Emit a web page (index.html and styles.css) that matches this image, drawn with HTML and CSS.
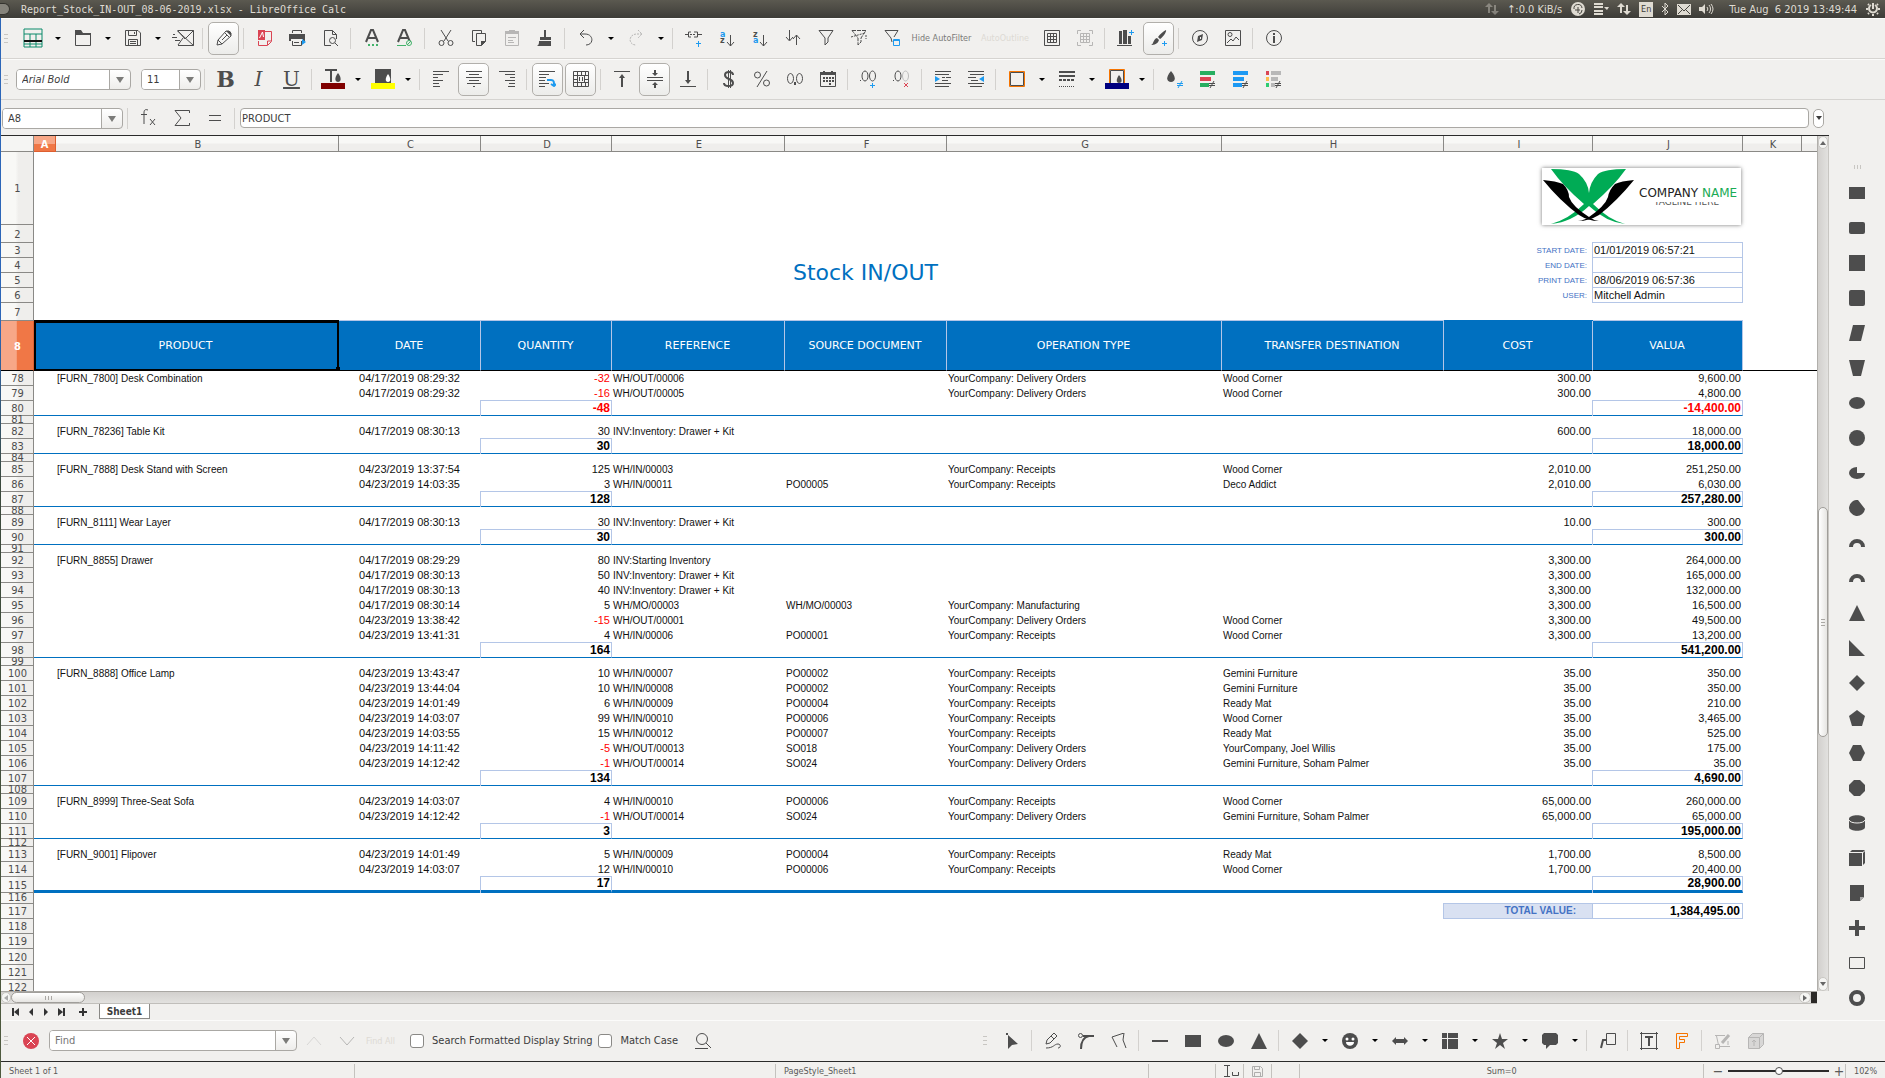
FILE: index.html
```html
<!DOCTYPE html>
<html lang="en">
<head>
    <meta charset="UTF-8">
    <meta name="viewport" content="width=device-width, initial-scale=1.0">
    <title>Report_Stock_IN-OUT_08-06-2019.xlsx - LibreOffice Calc</title>
    <link rel="stylesheet" href="styles.css">
</head>
<body>
<div class="app">
    <!-- Title bar -->
    <header class="titlebar">
        <span class="window-dot"></span>
        <span class="window-title">Report_Stock_IN-OUT_08-06-2019.xlsx - LibreOffice Calc</span>
        <div class="tray">
            <svg class="dim" width="14" height="14" viewBox="0 0 14 14"><path d="M4 1L0 5h3v6h2V5h3zM10 13l4-4h-3V3H9v6H6z"/></svg>
            <span>↑:0.0 KiB/s</span>
            <svg width="16" height="16" viewBox="0 0 16 16"><circle cx="8" cy="8" r="7"/><path class="cut" d="M4 8a4 4 0 0 1 8-1M5 9h5M8 6v6M12 9a4 4 0 0 1-3 4"/></svg>
            <svg width="15" height="14" viewBox="0 0 15 14"><path d="M0 1h9v2H0zM0 4h9v2H0zM0 8h9v2H0zM0 11h9v2H0zM10 5h5l-2 3z"/></svg>
            <svg width="14" height="14" viewBox="0 0 14 14"><path d="M4 1L0 5h3v6h2V5h3zM10 13l4-4h-3V3H9v6H6z"/></svg>
            <span class="lang">En</span>
            <svg class="line" width="8" height="14" viewBox="0 0 8 14"><path d="M1 4l6 6-3 3V1l3 3-6 6"/></svg>
            <svg width="14" height="11" viewBox="0 0 14 11"><path d="M0 0h14v11H0z"/><path class="cut" d="M1 1l6 6 6-6M1 10l4-4M13 10L9 6"/></svg>
            <svg width="16" height="12" viewBox="0 0 16 12"><path d="M0 4h3l3-3v10L3 8H0z"/><path class="ring" d="M8 4a3 3 0 0 1 0 4M10 2a6 6 0 0 1 0 8M12 1a8 8 0 0 1 0 10"/></svg>
            <span class="clock">Tue Aug  6 2019 13:49:44</span>
            <svg class="line" width="16" height="16" viewBox="0 0 16 16"><path stroke-width="2" d="M6 4a4 4 0 1 0 4 0M8 2v6"/><path stroke-width="2" d="M1 8h2M13 8h2M3 13l1-1M13 13l-1-1M3 3l1 1M13 3l-1 1M8 13v2"/></svg>
        </div>
    </header>

    <!-- Standard toolbar -->
    <div class="toolbar">
        <span class="grip"></span>
        <button class="tool" title="New"><svg class="green" width="20" height="20" viewBox="0 0 20 20"><path d="M1 1h18v18H1zM1 6h18M7 6v13M13 6v13"/><path stroke="#111" stroke-width="2" d="M1 13h18"/><path d="M1 16h18"/></svg></button>
        <button class="drop" title="New options"></button>
        <button class="tool" title="Open"><svg width="16" height="16" viewBox="0 0 16 16"><path d="M.5 3v12.500h15V3.500H8"/><path class="solid" d="M0 0h6l2 3h8v2H0z"/></svg></button>
        <button class="drop" title="Recent files"></button>
        <button class="tool" title="Save"><svg width="16" height="16" viewBox="0 0 16 16"><path d="M.5.500H13l2.500 2.500v12.500H.5zM3.500.500v5h8v-5M9.500 2v2M3.500 15.500v-6h9v6M5 11.500h6M5 13.500h6"/></svg></button>
        <button class="drop" title="Save as"></button>
        <button class="tool" title="Send by e-mail"><svg width="22" height="16" viewBox="0 0 22 16"><path d="M6 .5h15.500v15L5 .5M6 15.500h15.500M21.500.500L13 9 6 1M6 15l5-7M0 7.500h5M3 10.500h5M1 4.500h2"/></svg></button>
        <span class="sep"></span>
        <button class="tool on" title="Edit mode"><svg width="16" height="16" viewBox="0 0 16 16"><path d="M1 15l1-5 8-9h3l2 2v3l-9 8zM9 3l4 4M2 10l4 4M6 10l5-5"/><path class="solid" d="M10 1h4l1 2v3z"/></svg></button>
        <span class="sep"></span>
        <button class="tool" title="Export as PDF"><svg class="red" width="16" height="16" viewBox="0 0 16 16"><path d="M8 1.500h6.500v10l-4 4h-9V11M10.500 15v-4H14"/><path class="solid" d="M1 0h7v10H1z"/><path stroke="#fff" d="M2.500 8l3-6 1 5"/></svg></button>
        <button class="tool" title="Print"><svg width="17" height="16" viewBox="0 0 17 16"><path d="M3.500 3V.500h9V3M3.500 11v4.500h9V11M5 12.500h5"/><path class="solid" d="M0 4h16v7h-2V9H2v2H0z"/><path fill="#1e9bf0" stroke="none" d="M13 9l4 3-4 3z"/></svg></button>
        <button class="tool" title="Print preview"><svg width="16" height="16" viewBox="0 0 16 16"><path d="M8 15.500H1.500V.500h8l4 4V9M9.500.500v4h4"/><circle cx="9.500" cy="10.500" r="3"/><path d="M12 13l3 3"/></svg></button>
        <span class="sep"></span>
        <button class="tool" title="Spelling"><svg width="16" height="18" viewBox="0 0 16 18"><path stroke-width="2" d="M2 13L7 1h2l5 12M4 9h8"/><path fill="#43b36b" stroke="none" d="M4 15h2v2H4zM8 15h2v2H8zM12 15h2v2h-2z"/></svg></button>
        <button class="tool" title="Auto spellcheck"><svg width="17" height="18" viewBox="0 0 17 18"><path stroke-width="2" d="M2 13L7 1h2l5 12M4 9h8"/><path stroke="#43b36b" d="M1 16.500h9"/><circle fill="#f1f0ee" stroke="#43b36b" cx="13" cy="14" r="2.500"/><path stroke="#43b36b" d="M11 16l4-4"/></svg></button>
        <span class="sep"></span>
        <button class="tool" title="Cut"><svg width="16" height="16" viewBox="0 0 16 16"><path d="M3 0l7 11M13 0L6 11"/><circle cx="3.500" cy="13" r="2.500"/><circle cx="12.500" cy="13" r="2.500"/></svg></button>
        <button class="tool" title="Copy"><svg width="16" height="16" viewBox="0 0 16 16"><path d="M4 11.500H1.500V.500h9V3M5.500 3.500h9v8l-4 4h-5z"/><path class="solid" d="M10 16v-5h5z"/></svg></button>
        <button class="tool off" title="Paste"><svg width="16" height="16" viewBox="0 0 16 16"><path d="M1.500 2v13.500h13V2zM4 7.500h8M4 10.500h5M4 12.500h6"/><path class="solid" d="M1 1h4V0h6v1h4v3H1z"/></svg></button>
        <button class="tool" title="Clone formatting"><svg width="16" height="16" viewBox="0 0 16 16"><path class="solid" d="M7 0h2v7h5v3H3V7h4zM2 11h12v5H0c2-1 2-3 2-5z"/></svg></button>
        <span class="sep"></span>
        <button class="tool" title="Undo"><svg width="16" height="16" viewBox="0 0 16 16"><path d="M6 0L2 4l4 4M2 4h5c9 0 9 11 1 11"/></svg></button>
        <button class="drop" title="Undo list"></button>
        <button class="tool off" title="Redo"><svg width="16" height="16" viewBox="0 0 16 16"><path stroke-dasharray="2 1" d="M10 0l4 4-4 4M14 4H9c-9 0-9 11-1 11"/></svg></button>
        <button class="drop" title="Redo list"></button>
        <span class="sep"></span>
        <button class="tool" title="Hyperlink"><svg width="17" height="18" viewBox="0 0 17 18"><path d="M0 5.500h4M6 3H3.500v5H6M5 5.500h2M8 5.500h2M9 3h3.500v5H9M13 5.500h4"/><path stroke="#1e9bf0" d="M13.500 12v6M11 14.500h5"/></svg></button>
        <button class="tool" title="Sort ascending"><svg width="16" height="18" viewBox="0 0 16 18"><text class="mark blue" x="1" y="8">a</text><text class="mark" x="1" y="14">z</text><path d="M11.500 6v11M8 13l3.500 4 3.500-4"/></svg></button>
        <button class="tool" title="Sort descending"><svg width="16" height="18" viewBox="0 0 16 18"><text class="mark" x="1" y="8">z</text><text class="mark blue" x="1" y="14">a</text><path d="M11.500 6v11M8 13l3.500 4 3.500-4"/></svg></button>
        <button class="tool" title="Sort"><svg width="16" height="16" viewBox="0 0 16 16"><path d="M4.500 0v10M1 7l3.500 4L8 7M11.500 15V5M8 9l3.500-4L15 9"/></svg></button>
        <button class="tool" title="AutoFilter"><svg width="16" height="16" viewBox="0 0 16 16"><path d="M1 .5h14L10 8v4l-3 3V8z"/></svg></button>
        <button class="tool" title="Standard filter"><svg width="16" height="16" viewBox="0 0 16 16"><path stroke-dasharray="4 1" d="M1 .5h14L10 8v4l-3 3V8z"/><path stroke-dasharray="2 1" d="M0 7l14-4M15 5v4"/></svg></button>
        <button class="tool" title="Advanced filter"><svg width="16" height="16" viewBox="0 0 16 16"><path d="M8 12l-1-4L1 .5h13L10 7"/><path stroke="#1e9bf0" d="M9.500 9.500h6v6h-6zM9.500 10.500h6"/></svg></button>
        <button class="tool-text tool-text-wide">Hide AutoFilter</button>
        <button class="tool-text faint">AutoOutline</button>
        <button class="tool" title="Headers and footers"><svg width="16" height="16" viewBox="0 0 16 16"><path d="M.5.500h15v15H.5zM3.500 3.500h9v9h-9zM6.500 3.500v9M9.500 3.500v9M3.500 6.500h9M3.500 9.500h9"/></svg></button>
        <button class="tool off" title="Print area"><svg width="16" height="16" viewBox="0 0 16 16"><path d="M.5 4V.500H4M12 .5h3.500V4M.5 12v3.500H4M12 15.500h3.500V12M3.500 3.500h9v9h-9zM6.500 3.500v9M9.500 3.500v9M3.500 6.500h9M3.500 9.500h9"/></svg></button>
        <span class="sep"></span>
        <button class="tool" title="Insert chart"><svg width="17" height="16" viewBox="0 0 17 16"><path class="solid" d="M2 1h3v13H2zM6 0h4v14H6zM11 6h3v8h-3zM0 15h15v1H0z"/><path stroke="#1e9bf0" d="M14.500 0v5M12 2.500h5"/></svg></button>
        <button class="tool on" title="Show draw functions"><svg width="16" height="16" viewBox="0 0 16 16"><path class="solid" d="M15 0c1 2-4 8-6 9L7 7c2-3 6-6 8-7zM6 8l2 2c-1 4-5 5-8 5 3-1 2-6 6-7z"/><path stroke="#1e9bf0" d="M13.500 11v5M11 13.500h5"/></svg></button>
        <span class="sep"></span>
        <button class="tool" title="Navigator"><svg width="16" height="16" viewBox="0 0 16 16"><circle cx="8" cy="8" r="7.500"/><path class="solid" d="M11 4l-1 6-5 2 1-6zM8 7v2h1V7z"/></svg></button>
        <button class="tool" title="Insert image"><svg width="16" height="16" viewBox="0 0 16 16"><path d="M.5.500h15v15H.5zM2 13l4-4 2 2 3-4 3 3"/><circle cx="5" cy="4.500" r="2"/></svg></button>
        <span class="sep"></span>
        <button class="tool" title="Help"><svg width="16" height="16" viewBox="0 0 16 16"><circle cx="8" cy="8" r="7.500"/><path stroke-width="2" d="M8 3v2M8 6v7"/></svg></button>
    </div>

    <!-- Formatting toolbar -->
    <div class="toolbar">
        <span class="grip"></span>
        <span class="combo combo-font"><select class="italic" aria-label="Font name"><option>Arial Bold</option></select></span>
        <span class="combo combo-size"><select aria-label="Font size"><option>11</option></select></span>
        <span class="sep"></span>
        <button class="tool glyph bold" title="Bold">B</button>
        <button class="tool glyph slant" title="Italic">I</button>
        <button class="tool glyph under" title="Underline">U</button>
        <span class="sep"></span>
        <button class="tool" title="Font color"><svg width="24" height="20" viewBox="0 0 24 20"><path stroke-width="2" d="M4 1h12M10 1v12"/><path class="solid" d="M17 4c4 5 3 9 0 9s-4-4 0-9z"/><path fill="#800000" stroke="none" d="M0 14h24v6H0z"/></svg></button>
        <button class="drop" title="Font colors"></button>
        <button class="tool" title="Background color"><svg width="24" height="20" viewBox="0 0 24 20"><path class="solid" d="M4 0h16v14H4z"/><path fill="#fff" stroke="none" d="M17 5c3 4 3 8 0 8s-3-4 0-8z"/><path fill="#ff0" stroke="none" d="M0 14h24v6H0z"/></svg></button>
        <button class="drop" title="Background colors"></button>
        <span class="sep"></span>
        <button class="tool" title="Align left"><svg width="16" height="16" viewBox="0 0 16 16"><path d="M0 .5h16M0 3.500h10M0 6.500h5M0 9.500h10M0 12.500h6M0 15.500h7"/></svg></button>
        <button class="tool on" title="Center"><svg width="16" height="16" viewBox="0 0 16 16"><path d="M0 .5h16M3 3.500h10M0 6.500h16M3 9.500h10M1 12.500h14M7 15.500h2"/></svg></button>
        <button class="tool" title="Align right"><svg width="16" height="16" viewBox="0 0 16 16"><path d="M0 .5h16M6 3.500h10M11 6.500h5M6 9.500h10M10 12.500h6M9 15.500h7"/></svg></button>
        <span class="sep"></span>
        <button class="tool on" title="Wrap text"><svg width="17" height="16" viewBox="0 0 17 16"><path d="M0 .5h16M0 3.500h10M0 6.500h7M0 9.500h6M0 12.500h10M0 15.500h6"/><path stroke="#1e9bf0" stroke-width="2" d="M8 9h4c3 0 3 2 3 5M12 13l3 2 2-2"/></svg></button>
        <button class="tool on" title="Merge cells"><svg width="16" height="16" viewBox="0 0 16 16"><path d="M.5.500h15v15H.5zM0 4.500h16M0 11.500h16M4.500 0v5M8.500 0v4M12.500 0v5M4.500 11v5M8.500 12v4M12.500 11v5M0 8.500h4M12 8.500h4M6.500 6v4M9.500 6v4M4.500 5v6M11.500 5v6"/></svg></button>
        <span class="sep"></span>
        <button class="tool" title="Align top"><svg width="16" height="16" viewBox="0 0 16 16"><path d="M0 .5h16"/><path stroke-width="2" d="M8 5v11"/><path class="solid" d="M8 3l3 4H5z"/></svg></button>
        <button class="tool on" title="Center vertically"><svg width="16" height="18" viewBox="0 0 16 18"><path d="M0 7.500h16M0 10.500h16"/><path class="solid" d="M7 0h2v3h2L8 6 5 3h2zM7 18h2v-3h2l-3-3-3 3h2z"/></svg></button>
        <button class="tool" title="Align bottom"><svg width="16" height="16" viewBox="0 0 16 16"><path d="M0 15.500h16"/><path stroke-width="2" d="M8 0v11"/><path class="solid" d="M8 13l3-4H5z"/></svg></button>
        <span class="sep"></span>
        <button class="tool" title="Currency"><svg width="12" height="18" viewBox="0 0 12 18"><path stroke-width="2" d="M10 5c0-4-8-4-8 0 0 5 8 3 8 8 0 4-9 4-9 0"/><path d="M5.500 0v18M7.500 0v18"/></svg></button>
        <button class="tool" title="Percent"><svg width="16" height="16" viewBox="0 0 16 16"><circle cx="3.500" cy="4" r="3"/><circle cx="12.500" cy="12" r="3"/><path d="M13 0L3 16"/></svg></button>
        <button class="tool" title="Number"><svg width="18" height="16" viewBox="0 0 18 16"><ellipse cx="4.500" cy="7.500" rx="3" ry="5"/><ellipse cx="13.500" cy="7.500" rx="3" ry="5"/><path stroke-width="2" d="M9 11v3"/></svg></button>
        <button class="tool" title="Date"><svg width="16" height="16" viewBox="0 0 16 16"><path d="M.5 1v14.500h15V1"/><path class="solid" d="M0 1h3V0h2v1h6V0h2v1h3v3H0zM3 6h2v2H3zM6 6h2v2H6zM9 6h2v2H9zM12 6h2v2h-2zM3 9h2v2H3zM6 9h2v2H6zM9 9h2v2H9zM12 9h2v2h-2zM9 12h2v2H9z"/></svg></button>
        <span class="sep"></span>
        <button class="tool" title="Add decimal place"><svg width="17" height="18" viewBox="0 0 17 18"><ellipse cx="5" cy="6" rx="3" ry="5"/><ellipse cx="12.500" cy="6" rx="3" ry="5"/><path d="M0 10.500h1"/><path stroke="#1e9bf0" d="M12.500 13v5M10 15.500h5"/></svg></button>
        <button class="tool" title="Delete decimal place"><svg width="17" height="18" viewBox="0 0 17 18"><ellipse cx="5" cy="6" rx="3" ry="5"/><ellipse stroke="#bbb" cx="12.500" cy="6" rx="3" ry="5"/><path d="M0 10.500h1"/><path stroke="#da4453" d="M11 13l4 4M15 13l-4 4"/></svg></button>
        <span class="sep"></span>
        <button class="tool" title="Increase indent"><svg width="16" height="16" viewBox="0 0 16 16"><path d="M0 .5h16M0 3.500h14M7 6.500h3M11 6.500h5M7 9.500h6M0 12.500h16M0 15.500h14"/><path fill="#1e9bf0" stroke="none" d="M0 5l5 3-5 3z"/></svg></button>
        <button class="tool" title="Decrease indent"><svg width="16" height="16" viewBox="0 0 16 16"><path d="M0 .5h16M2 3.500h14M0 6.500h8M3 9.500h7M0 12.500h16M2 15.500h12"/><path fill="#1e9bf0" stroke="none" d="M16 5l-5 3 5 3z"/></svg></button>
        <span class="sep"></span>
        <button class="tool" title="Borders"><svg width="16" height="16" viewBox="0 0 16 16"><path stroke="#f67400" d="M.5.500h15v15H.5z"/><path d="M1.500 1.500h13v13h-13z"/></svg></button>
        <button class="drop" title="Border list"></button>
        <button class="tool" title="Border style"><svg width="16" height="16" viewBox="0 0 16 16"><path stroke-width="2" d="M0 1h16M0 5h16"/><path stroke-width="2" stroke-dasharray="3 1" d="M0 9h16"/><path stroke-dasharray="1 1" d="M0 15.500h16"/></svg></button>
        <button class="drop" title="Border styles"></button>
        <button class="tool" title="Border color"><svg width="24" height="20" viewBox="0 0 24 20"><path stroke="#f67400" d="M4.500 14V.500h15V14"/><path d="M5.500 14V1.500h13V14"/><path class="solid" d="M14 6c4 5 3 8 0 8s-3-4 0-8z"/><path fill="#000080" stroke="none" d="M0 14h24v6H0z"/></svg></button>
        <button class="drop" title="Border colors"></button>
        <span class="sep"></span>
        <button class="tool" title="Conditional formatting"><svg width="17" height="18" viewBox="0 0 17 18"><path class="solid" d="M5 1c6 7 4 11 0 11S-1 8 5 1z"/><path stroke="#1e9bf0" d="M11 13.500h6M11 15.500h6M16 11l-4 7"/></svg></button>
        <button class="tool" title="Color scale"><svg width="17" height="18" viewBox="0 0 17 18"><path fill="#27ae60" stroke="none" d="M1 1h15v4H1zM1 13h9v4H1z"/><path fill="#da4453" stroke="none" d="M1 7h11v4H1z"/><path d="M10 13.500h6M10 15.500h6M15 11l-4 7"/></svg></button>
        <button class="tool" title="Data bar"><svg width="17" height="18" viewBox="0 0 17 18"><path fill="#1d99f3" stroke="none" d="M1 1h15v4H1zM1 7h11v4H1zM1 13h9v4H1z"/><path d="M10 13.500h6M10 15.500h6M15 11l-4 7"/></svg></button>
        <button class="tool" title="Icon set"><svg width="17" height="18" viewBox="0 0 17 18"><path fill="#b8b8b8" stroke="none" d="M6 1h10v4H6zM6 7h7v4H6zM6 13h4v4H6z"/><path fill="#da4453" stroke="none" d="M1 1h3v4H1z"/><path fill="#fdbc4b" stroke="none" d="M1 7h3v4H1z"/><path fill="#2ecc71" stroke="none" d="M1 13h3v4H1z"/><path d="M10 13.500h6M10 15.500h6M15 11l-4 7"/></svg></button>
    </div>

    <!-- Formula bar -->
    <div class="formula-bar">
        <span class="combo combo-name"><input type="text" value="A8" aria-label="Name box"></span>
        <span class="sep"></span>
        <button class="tool" title="Function wizard"><svg width="16" height="18" viewBox="0 0 16 18"><path d="M7 1c-3-1-4 0-4 3v11M0 5.500h6M9 10l5 6M14 10l-5 6"/></svg></button>
        <button class="tool" title="Sum"><svg width="16" height="16" viewBox="0 0 16 16"><path d="M15.500 3V.500H1L7 8l-6 7.500h14.500V13"/></svg></button>
        <button class="tool" title="Formula"><svg width="12" height="8" viewBox="0 0 12 8"><path d="M0 1.500h12M0 6.500h12"/></svg></button>
        <span class="sep"></span>
        <input class="formula" type="text" value="PRODUCT" aria-label="Input line">
        <button class="expand" title="Expand formula bar"></button>
    </div>

    <div class="workspace">
        <div class="sheet-area">
            <div class="sheet-row">
                <div class="sheet">
                    <table>
                        <colgroup>
                            <col class="c-num"><col class="c-a"><col class="c-b"><col class="c-c"><col class="c-d"><col class="c-e"><col class="c-f"><col class="c-g"><col class="c-h"><col class="c-i"><col class="c-j"><col class="c-k"><col>
                        </colgroup>
                        <thead>
                            <tr><th class="corner"></th><th class="picked">A</th><th>B</th><th>C</th><th>D</th><th>E</th><th>F</th><th>G</th><th>H</th><th>I</th><th>J</th><th>K</th><th class="last"></th></tr>
                        </thead>
                        <tbody>
                            <tr class="h73"><th>1</th><td colspan="9"></td>
                                <td class="logo-cell">
                                    <svg class="logo" width="199" height="57" viewBox="0 0 199 57">
                                        <path fill="#00ab55" d="M9 1Q30 1 37 6Q46 14 47 25Q48 14 56 6Q63 1 84 1Q72 18 51 36Q67 52 83 56Q64 54 47 38Q30 54 9 56Q27 51 42 36Q21 18 9 1z"/>
                                        <path d="M1 12Q14 13 21 16Q27 22 27 29Q30 38 47 49Q51 52 57 53Q46 53 37 47Q18 33 1 12z"/>
                                        <path d="M92 12Q79 13 73 16Q67 22 66 29Q63 38 47 49Q43 52 36 53Q47 53 57 47Q75 33 92 12z"/>
                                        <text class="logo-name" x="97" y="29">COMPANY <tspan fill="#1aab55">NAME</tspan></text>
                                        <clipPath id="tagline"><path d="M100 34h99v3h-99z"/></clipPath>
                                        <text class="logo-tag" x="112" y="37" clip-path="url(#tagline)">TAGLINE HERE</text>
                                    </svg>
                                </td><td colspan="2"></td></tr>
                            <tr class="h18"><th>2</th><td colspan="12"></td></tr>
                            <tr><th>3</th><td colspan="5"></td><td class="report-title" rowspan="4">Stock IN/OUT</td><td colspan="2"></td><td class="label">START DATE:</td><td class="box">01/01/2019 06:57:21</td><td colspan="2"></td></tr>
                            <tr><th>4</th><td colspan="5"></td><td colspan="2"></td><td class="label">END DATE:</td><td class="box"></td><td colspan="2"></td></tr>
                            <tr><th>5</th><td colspan="5"></td><td colspan="2"></td><td class="label">PRINT DATE:</td><td class="box">08/06/2019 06:57:36</td><td colspan="2"></td></tr>
                            <tr><th>6</th><td colspan="5"></td><td colspan="2"></td><td class="label">USER:</td><td class="box">Mitchell Admin</td><td colspan="2"></td></tr>
                            <tr class="h18"><th>7</th><td colspan="12"></td></tr>
                            <tr class="heads"><th>8</th><td class="head cursor" colspan="2">PRODUCT</td><td class="head">DATE</td><td class="head">QUANTITY</td><td class="head">REFERENCE</td><td class="head">SOURCE DOCUMENT</td><td class="head">OPERATION TYPE</td><td class="head">TRANSFER DESTINATION</td><td class="head plain">COST</td><td class="head">VALUA</td><td colspan="2"></td></tr>

                            <tr><th>78</th><td></td><td>[FURN_7800] Desk Combination</td><td class="date">04/17/2019 08:29:32</td><td class="num neg">-32</td><td>WH/OUT/00006</td><td></td><td>YourCompany: Delivery Orders</td><td>Wood Corner</td><td class="num">300.00</td><td class="num">9,600.00</td></tr>
                            <tr><th>79</th><td></td><td></td><td class="date">04/17/2019 08:29:32</td><td class="num neg">-16</td><td>WH/OUT/00005</td><td></td><td>YourCompany: Delivery Orders</td><td>Wood Corner</td><td class="num">300.00</td><td class="num">4,800.00</td></tr>
                            <tr class="total"><th>80</th><td colspan="3"></td><td class="sum neg">-48</td><td colspan="5"></td><td class="sum neg">-14,400.00</td></tr>
                            <tr class="gap"><th>81</th></tr>
                            <tr><th>82</th><td></td><td>[FURN_78236] Table Kit</td><td class="date">04/17/2019 08:30:13</td><td class="num">30</td><td>INV:Inventory: Drawer + Kit</td><td></td><td></td><td></td><td class="num">600.00</td><td class="num">18,000.00</td></tr>
                            <tr class="total"><th>83</th><td colspan="3"></td><td class="sum">30</td><td colspan="5"></td><td class="sum">18,000.00</td></tr>
                            <tr class="gap"><th>84</th></tr>
                            <tr><th>85</th><td></td><td>[FURN_7888] Desk Stand with Screen</td><td class="date">04/23/2019 13:37:54</td><td class="num">125</td><td>WH/IN/00003</td><td></td><td>YourCompany: Receipts</td><td>Wood Corner</td><td class="num">2,010.00</td><td class="num">251,250.00</td></tr>
                            <tr><th>86</th><td></td><td></td><td class="date">04/23/2019 14:03:35</td><td class="num">3</td><td>WH/IN/00011</td><td>PO00005</td><td>YourCompany: Receipts</td><td>Deco Addict</td><td class="num">2,010.00</td><td class="num">6,030.00</td></tr>
                            <tr class="total"><th>87</th><td colspan="3"></td><td class="sum">128</td><td colspan="5"></td><td class="sum">257,280.00</td></tr>
                            <tr class="gap"><th>88</th></tr>
                            <tr><th>89</th><td></td><td>[FURN_8111] Wear Layer</td><td class="date">04/17/2019 08:30:13</td><td class="num">30</td><td>INV:Inventory: Drawer + Kit</td><td></td><td></td><td></td><td class="num">10.00</td><td class="num">300.00</td></tr>
                            <tr class="total"><th>90</th><td colspan="3"></td><td class="sum">30</td><td colspan="5"></td><td class="sum">300.00</td></tr>
                            <tr class="gap"><th>91</th></tr>
                            <tr><th>92</th><td></td><td>[FURN_8855] Drawer</td><td class="date">04/17/2019 08:29:29</td><td class="num">80</td><td>INV:Starting Inventory</td><td></td><td></td><td></td><td class="num">3,300.00</td><td class="num">264,000.00</td></tr>
                            <tr><th>93</th><td></td><td></td><td class="date">04/17/2019 08:30:13</td><td class="num">50</td><td>INV:Inventory: Drawer + Kit</td><td></td><td></td><td></td><td class="num">3,300.00</td><td class="num">165,000.00</td></tr>
                            <tr><th>94</th><td></td><td></td><td class="date">04/17/2019 08:30:13</td><td class="num">40</td><td>INV:Inventory: Drawer + Kit</td><td></td><td></td><td></td><td class="num">3,300.00</td><td class="num">132,000.00</td></tr>
                            <tr><th>95</th><td></td><td></td><td class="date">04/17/2019 08:30:14</td><td class="num">5</td><td>WH/MO/00003</td><td>WH/MO/00003</td><td>YourCompany: Manufacturing</td><td></td><td class="num">3,300.00</td><td class="num">16,500.00</td></tr>
                            <tr><th>96</th><td></td><td></td><td class="date">04/23/2019 13:38:42</td><td class="num neg">-15</td><td>WH/OUT/00001</td><td></td><td>YourCompany: Delivery Orders</td><td>Wood Corner</td><td class="num">3,300.00</td><td class="num">49,500.00</td></tr>
                            <tr><th>97</th><td></td><td></td><td class="date">04/23/2019 13:41:31</td><td class="num">4</td><td>WH/IN/00006</td><td>PO00001</td><td>YourCompany: Receipts</td><td>Wood Corner</td><td class="num">3,300.00</td><td class="num">13,200.00</td></tr>
                            <tr class="total"><th>98</th><td colspan="3"></td><td class="sum">164</td><td colspan="5"></td><td class="sum">541,200.00</td></tr>
                            <tr class="gap"><th>99</th></tr>
                            <tr><th>100</th><td></td><td>[FURN_8888] Office Lamp</td><td class="date">04/23/2019 13:43:47</td><td class="num">10</td><td>WH/IN/00007</td><td>PO00002</td><td>YourCompany: Receipts</td><td>Gemini Furniture</td><td class="num">35.00</td><td class="num">350.00</td></tr>
                            <tr><th>101</th><td></td><td></td><td class="date">04/23/2019 13:44:04</td><td class="num">10</td><td>WH/IN/00008</td><td>PO00002</td><td>YourCompany: Receipts</td><td>Gemini Furniture</td><td class="num">35.00</td><td class="num">350.00</td></tr>
                            <tr><th>102</th><td></td><td></td><td class="date">04/23/2019 14:01:49</td><td class="num">6</td><td>WH/IN/00009</td><td>PO00004</td><td>YourCompany: Receipts</td><td>Ready Mat</td><td class="num">35.00</td><td class="num">210.00</td></tr>
                            <tr><th>103</th><td></td><td></td><td class="date">04/23/2019 14:03:07</td><td class="num">99</td><td>WH/IN/00010</td><td>PO00006</td><td>YourCompany: Receipts</td><td>Wood Corner</td><td class="num">35.00</td><td class="num">3,465.00</td></tr>
                            <tr><th>104</th><td></td><td></td><td class="date">04/23/2019 14:03:55</td><td class="num">15</td><td>WH/IN/00012</td><td>PO00007</td><td>YourCompany: Receipts</td><td>Ready Mat</td><td class="num">35.00</td><td class="num">525.00</td></tr>
                            <tr><th>105</th><td></td><td></td><td class="date">04/23/2019 14:11:42</td><td class="num neg">-5</td><td>WH/OUT/00013</td><td>SO018</td><td>YourCompany: Delivery Orders</td><td>YourCompany, Joel Willis</td><td class="num">35.00</td><td class="num">175.00</td></tr>
                            <tr><th>106</th><td></td><td></td><td class="date">04/23/2019 14:12:42</td><td class="num neg">-1</td><td>WH/OUT/00014</td><td>SO024</td><td>YourCompany: Delivery Orders</td><td>Gemini Furniture, Soham Palmer</td><td class="num">35.00</td><td class="num">35.00</td></tr>
                            <tr class="total"><th>107</th><td colspan="3"></td><td class="sum">134</td><td colspan="5"></td><td class="sum">4,690.00</td></tr>
                            <tr class="gap"><th>108</th></tr>
                            <tr><th>109</th><td></td><td>[FURN_8999] Three-Seat Sofa</td><td class="date">04/23/2019 14:03:07</td><td class="num">4</td><td>WH/IN/00010</td><td>PO00006</td><td>YourCompany: Receipts</td><td>Wood Corner</td><td class="num">65,000.00</td><td class="num">260,000.00</td></tr>
                            <tr><th>110</th><td></td><td></td><td class="date">04/23/2019 14:12:42</td><td class="num neg">-1</td><td>WH/OUT/00014</td><td>SO024</td><td>YourCompany: Delivery Orders</td><td>Gemini Furniture, Soham Palmer</td><td class="num">65,000.00</td><td class="num">65,000.00</td></tr>
                            <tr class="total"><th>111</th><td colspan="3"></td><td class="sum">3</td><td colspan="5"></td><td class="sum">195,000.00</td></tr>
                            <tr class="gap"><th>112</th></tr>
                            <tr><th>113</th><td></td><td>[FURN_9001] Flipover</td><td class="date">04/23/2019 14:01:49</td><td class="num">5</td><td>WH/IN/00009</td><td>PO00004</td><td>YourCompany: Receipts</td><td>Ready Mat</td><td class="num">1,700.00</td><td class="num">8,500.00</td></tr>
                            <tr><th>114</th><td></td><td></td><td class="date">04/23/2019 14:03:07</td><td class="num">12</td><td>WH/IN/00010</td><td>PO00006</td><td>YourCompany: Receipts</td><td>Wood Corner</td><td class="num">1,700.00</td><td class="num">20,400.00</td></tr>
                            <tr class="total closing"><th>115</th><td colspan="3"></td><td class="sum">17</td><td colspan="5"></td><td class="sum">28,900.00</td></tr>
                            <tr class="h11"><th>116</th></tr>
                            <tr><th>117</th><td colspan="8"></td><td class="grand-label">TOTAL VALUE:</td><td class="grand">1,384,495.00</td></tr>
                            <tr><th>118</th></tr>
                            <tr><th>119</th></tr>
                            <tr class="h16"><th>120</th></tr>
                            <tr><th>121</th></tr>
                            <tr><th>122</th></tr>
                        </tbody>
                    </table>
                </div>
                <div class="vscroll">
                    <span class="step up"></span>
                    <span class="thumb"></span>
                    <span class="step down"></span>
                </div>
            </div>
            <div class="hscroll">
                <span class="step left"></span>
                <span class="thumb"></span>
                <span class="track"></span>
                <span class="step right"></span>
                <span class="splitter"></span>
            </div>
            <div class="tabs">
                <button title="First sheet"><svg width="10" height="8" viewBox="0 0 10 8"><path class="solid" d="M1 0h2v8H1zM3 4l5-4v8z"/></svg></button>
                <button title="Previous sheet"><svg width="10" height="8" viewBox="0 0 10 8"><path class="solid" d="M3 4l4-4v8z"/></svg></button>
                <button title="Next sheet"><svg width="10" height="8" viewBox="0 0 10 8"><path class="solid" d="M7 4L3 0v8z"/></svg></button>
                <button title="Last sheet"><svg width="10" height="8" viewBox="0 0 10 8"><path class="solid" d="M7 0h2v8H7zM7 4L2 0v8z"/></svg></button>
                <button class="add" title="Add sheet"><svg width="8" height="8" viewBox="0 0 8 8"><path class="solid" d="M3 0h2v3h3v2H5v3H3V5H0V3h3z"/></svg></button>
                <button class="tab">Sheet1</button>
            </div>
        </div>

        <!-- Basic shapes -->
        <div class="shapes">
            <span class="shapes-grip"></span>
            <button title="Rectangle"><svg width="16" height="16" viewBox="0 0 16 16"><path d="M0 2h16v12H0z"/></svg></button>
            <button title="Rounded rectangle"><svg width="16" height="16" viewBox="0 0 16 16"><rect y="2" width="16" height="12" rx="2"/></svg></button>
            <button title="Square"><svg width="16" height="16" viewBox="0 0 16 16"><path d="M0 0h16v16H0z"/></svg></button>
            <button title="Rounded square"><svg width="16" height="16" viewBox="0 0 16 16"><rect width="16" height="16" rx="2"/></svg></button>
            <button title="Parallelogram"><svg width="16" height="16" viewBox="0 0 16 16"><path d="M4 0h12l-4 16H0z"/></svg></button>
            <button title="Trapezoid"><svg width="16" height="16" viewBox="0 0 16 16"><path d="M0 0h16l-4 16H4z"/></svg></button>
            <button title="Ellipse"><svg width="16" height="16" viewBox="0 0 16 16"><ellipse cx="8" cy="8" rx="8" ry="6"/></svg></button>
            <button title="Circle"><svg width="16" height="16" viewBox="0 0 16 16"><circle cx="8" cy="8" r="8"/></svg></button>
            <button title="Circle pie"><svg width="16" height="16" viewBox="0 0 16 16"><path d="M8 8V2a8 6 0 1 0 8 6z"/></svg></button>
            <button title="Circle segment"><svg width="16" height="16" viewBox="0 0 16 16"><path d="M9 0a8 8 0 1 0 7 9z"/></svg></button>
            <button title="Arc"><svg width="16" height="16" viewBox="0 0 16 16"><path d="M0 12a8 8 0 0 1 16 0h-4a4 4 0 0 0-8 0z"/></svg></button>
            <button title="Block arc"><svg width="16" height="16" viewBox="0 0 16 16"><path d="M0 12a8 8 0 0 1 16 0h-4a4 4 0 0 0-8 0z"/></svg></button>
            <button title="Isosceles triangle"><svg width="16" height="16" viewBox="0 0 16 16"><path d="M8 0l8 16H0z"/></svg></button>
            <button title="Right triangle"><svg width="16" height="16" viewBox="0 0 16 16"><path d="M0 0l16 16H0z"/></svg></button>
            <button title="Diamond"><svg width="16" height="16" viewBox="0 0 16 16"><path d="M8 0l8 8-8 8-8-8z"/></svg></button>
            <button title="Pentagon"><svg width="16" height="16" viewBox="0 0 16 16"><path d="M8 0l8 6-3 10H3L0 6z"/></svg></button>
            <button title="Hexagon"><svg width="16" height="16" viewBox="0 0 16 16"><path d="M4 0h8l4 8-4 8H4L0 8z"/></svg></button>
            <button title="Octagon"><svg width="16" height="16" viewBox="0 0 16 16"><path d="M5 0h6l5 5v6l-5 5H5l-5-5V5z"/></svg></button>
            <button title="Cylinder"><svg width="16" height="16" viewBox="0 0 16 16"><path d="M0 4c0-5 16-5 16 0v8c0 5-16 5-16 0z"/><path class="edge" d="M0 5c1 4 15 4 16 0"/></svg></button>
            <button title="Cube"><svg width="16" height="16" viewBox="0 0 16 16"><path d="M0 3h13v13H0zM1 2l2-2h13l-2 2zM14 3l2-2v12l-2 2z"/></svg></button>
            <button title="Folded corner"><svg width="16" height="16" viewBox="0 0 16 16"><path d="M1 0h14v12l-4 4H1z"/><path fill="#aaa" d="M11 16v-4h4z"/></svg></button>
            <button title="Cross"><svg width="16" height="16" viewBox="0 0 16 16"><path d="M6 0h4v6h6v4h-6v6H6v-6H0V6h6z"/></svg></button>
            <button title="Frame"><svg width="16" height="16" viewBox="0 0 16 16"><path class="hollow" d="M.5 2.500h15v11H.5z"/></svg></button>
            <button title="Ring"><svg width="16" height="16" viewBox="0 0 16 16"><circle class="ring" cx="8" cy="8" r="6"/></svg></button>
        </div>
    </div>

    <!-- Find bar and drawing toolbar -->
    <div class="toolbar findbar">
        <span class="grip"></span>
        <button class="close" title="Close find bar"><svg width="16" height="16" viewBox="0 0 16 16"><circle fill="#da4453" stroke="none" cx="8" cy="8" r="8"/><path stroke="#fff" d="M4 4l8 8M12 4l-8 8"/></svg></button>
        <span class="combo combo-find"><input type="text" placeholder="Find" aria-label="Find"></span>
        <button class="tool faint-icon" title="Find previous"><svg width="16" height="10" viewBox="0 0 16 10"><path d="M1 9l7-8 7 8"/></svg></button>
        <button class="tool off" title="Find next"><svg width="16" height="10" viewBox="0 0 16 10"><path d="M1 1l7 8 7-8"/></svg></button>
        <button class="tool-text find-all faint">Find All</button>
        <label class="check"><input type="checkbox">Search Formatted Display String</label>
        <label class="check"><input type="checkbox">Match Case</label>
        <button class="tool search" title="Find and replace"><svg width="18" height="16" viewBox="0 0 18 16"><circle cx="8" cy="6" r="5.500"/><path d="M12 10l5 5M1 15.500h13"/></svg></button>

        <div class="drawing">
            <span class="grip"></span>
            <button class="tool" title="Select"><svg width="12" height="16" viewBox="0 0 12 16"><path class="solid" d="M2 2l10 9-6 1-4 4zM0 0h2v2H0z"/></svg></button>
            <span class="sep"></span>
            <button class="tool" title="Freeform line"><svg width="16" height="16" viewBox="0 0 16 16"><path d="M1 11l1-4 7-7 3 3-7 7zM6 3l3 3M1 15c8 0 8-4 12-4 3 0 3 4 0 4"/></svg></button>
            <button class="tool" title="Curve"><svg width="16" height="16" viewBox="0 0 16 16"><circle cx="2.500" cy="2.500" r="2"/><path stroke-width="2" d="M5 3h11M3 16C3 8 6 4 11 3"/></svg></button>
            <button class="tool" title="Polygon"><svg width="16" height="16" viewBox="0 0 16 16"><path d="M6 14L1 4l12-4-1 7 3 8"/></svg></button>
            <span class="sep"></span>
            <button class="tool" title="Insert line"><svg width="16" height="16" viewBox="0 0 16 16"><path stroke-width="2" d="M0 8h16"/></svg></button>
            <button class="tool" title="Draw rectangle"><svg width="16" height="16" viewBox="0 0 16 16"><path class="solid" d="M0 2h16v12H0z"/></svg></button>
            <button class="tool" title="Draw ellipse"><svg width="16" height="16" viewBox="0 0 16 16"><ellipse class="solid" cx="8" cy="8" rx="8" ry="6"/></svg></button>
            <button class="tool" title="Draw triangle"><svg width="16" height="16" viewBox="0 0 16 16"><path class="solid" d="M8 0l8 16H0z"/></svg></button>
            <span class="sep"></span>
            <button class="tool" title="Basic shapes"><svg width="16" height="16" viewBox="0 0 16 16"><path class="solid" d="M8 0l8 8-8 8-8-8z"/></svg></button>
            <button class="drop" title="More basic shapes"></button>
            <button class="tool" title="Symbol shapes"><svg width="16" height="16" viewBox="0 0 16 16"><circle class="solid" cx="8" cy="8" r="8"/><circle fill="#fff" stroke="none" cx="5" cy="6" r="1.500"/><circle fill="#fff" stroke="none" cx="11" cy="6" r="1.500"/><path fill="#fff" stroke="none" d="M4 9h8c0 5-8 5-8 0z"/></svg></button>
            <button class="drop" title="More symbols"></button>
            <button class="tool" title="Block arrows"><svg width="16" height="16" viewBox="0 0 16 16"><path class="solid" d="M0 8l4-4v2h8V4l4 4-4 4v-2H4v2z"/></svg></button>
            <button class="drop" title="More arrows"></button>
            <button class="tool" title="Flowchart"><svg width="16" height="16" viewBox="0 0 16 16"><path class="solid" d="M0 0h5v5H0zM6 0h10v5H6zM0 6h5v10H0zM6 6h10v10H6z"/></svg></button>
            <button class="drop" title="More flowchart shapes"></button>
            <button class="tool" title="Stars"><svg width="16" height="16" viewBox="0 0 16 16"><path class="solid" d="M8 0l2 6h6l-5 4 2 6-5-4-5 4 2-6-5-4h6z"/></svg></button>
            <button class="drop" title="More stars"></button>
            <button class="tool" title="Callouts"><svg width="16" height="16" viewBox="0 0 16 16"><path class="solid" d="M2 0h12l2 2v8l-2 2H8l-4 4v-4H2l-2-2V2z"/></svg></button>
            <button class="drop" title="More callouts"></button>
            <span class="sep"></span>
            <button class="tool" title="Line callout"><svg width="16" height="16" viewBox="0 0 16 16"><path d="M6.500.500h9v11h-9z"/><path stroke-width="2" d="M1 15l2-8h3"/></svg></button>
            <span class="sep"></span>
            <button class="tool" title="Text box"><svg width="18" height="18" viewBox="0 0 18 18"><path d="M1.500 0v18M16.500 0v18M0 1.500h18M0 16.500h18"/><path stroke-width="2" d="M5 5h8M9 5v9"/></svg></button>
            <button class="tool" title="Fontwork"><svg width="14" height="16" viewBox="0 0 14 16"><path stroke="#f67400" d="M1.500.500h11v3h-8v3h5v3h-5v6h-3z"/></svg></button>
            <span class="sep"></span>
            <button class="tool off" title="Edit points"><svg width="16" height="16" viewBox="0 0 16 16"><path d="M0 2.500h10M1.500 3l2 9M.5 11.500h4v4h-4zM5 13.500h10M13 8v4"/><path stroke-width="3" d="M14 2l-7 8"/></svg></button>
            <button class="tool off" title="Extrusion"><svg width="16" height="16" viewBox="0 0 16 16"><path fill="#aaa" d="M.5 4.500h11v11H.500zM.5 4.500l4-4h11v11l-4 4M11.500 4.500l4-4M6 13V7M4 9l2-2 2 2"/></svg></button>
        </div>
    </div>

    <!-- Status bar -->
    <footer class="status">
        <span class="cell">Sheet 1 of 1</span>
        <span class="cell"></span>
        <span class="cell">PageStyle_Sheet1</span>
        <span class="cell"></span>
        <span class="cell"><svg width="16" height="12" viewBox="0 0 16 12"><path d="M0 .5h6M3.500 0v12M0 11.500h6M8.500 7v3.500h6V7"/></svg></span>
        <span class="cell pale"><svg width="11" height="11" viewBox="0 0 11 11"><path d="M.5.500h8l2 2v8H.500zM2.500.500v3h5v-3M2.500 10.500v-4h6v4"/></svg></span>
        <span class="cell"></span>
        <span class="cell sum-cell">Sum=0</span>
        <span class="cell zoom">
            <button class="zoom-step" title="Zoom out">−</button>
            <input type="range" min="20" max="180" value="100" aria-label="Zoom">
            <button class="zoom-step" title="Zoom in">+</button>
        </span>
        <span class="cell percent">102%</span>
    </footer>
</div>
</body>
</html>
```
FILE: styles.css
```css
* {
    box-sizing: border-box;
}

body {
    margin: 0;
    font-family: "DejaVu Sans Condensed", "DejaVu Sans", sans-serif;
    font-size: 11px;
    color: #3c3c3c;
    background-color: #f1f0ee;
}

button, input, select {
    font: inherit;
    color: inherit;
    margin: 0;
    padding: 0;
}

button {
    border: none;
    background: none;
    display: flex;
    align-items: center;
    justify-content: center;
}

/* a thin strip of desktop shows at the left of the window */
.app {
    height: 100vh;
    display: flex;
    flex-direction: column;
    padding-left: 1px;
    background: linear-gradient(#2c66b8 0, #2c66b8 30%, #3b4a3c 45%, #4f5a3e 100%) left / 1px 100% no-repeat;
}

/* title bar */
.titlebar {
    height: 18px;
    flex: none;
    display: flex;
    align-items: center;
    background: linear-gradient(#5b5950, #3d3c38);
    color: #dfdbd2;
    margin-left: -1px;
}

.window-dot {
    width: 10px;
    height: 12px;
    border-radius: 0 6px 6px 0;
    border: 1px solid #35342f;
    border-left: none;
    background-color: #85837b;
    margin-right: 11px;
}

.window-title {
    font-family: "DejaVu Sans Mono", monospace;
    font-size: 10px;
}

.tray {
    margin-left: auto;
    display: flex;
    align-items: center;
    gap: 8px;
    padding-right: 4px;
}

.tray svg {
    fill: #dfdbd2;
}

.tray .dim {
    opacity: 0.4;
}

.tray .cut {
    fill: none;
    stroke: #46453f;
}

.tray .line, .tray .ring {
    fill: none;
    stroke: #dfdbd2;
}

.lang {
    background-color: #dfdbd2;
    color: #3c3b37;
    font-size: 9px;
    line-height: 15px;
    padding: 0 2px;
}

.clock {
    white-space: pre;
    margin-left: 6px;
}

/* toolbars */
.toolbar {
    height: 41px;
    flex: none;
    display: flex;
    align-items: center;
    padding-bottom: 1px;
    border-top: 1px solid #fbfbfa;
    border-bottom: 1px solid #d6d4d1;
    background-color: #f1f0ee;
}

.grip {
    width: 4px;
    height: 9px;
    margin: 0 8px 0 3px;
    background: repeating-linear-gradient(#c8c6c2 0, #c8c6c2 1px, transparent 1px, transparent 4px);
}

.tool {
    width: 31px;
    height: 33px;
    margin: 0 1px;
    flex: none;
    border-radius: 5px;
}

.tool.on {
    border: 1px solid #b1afab;
    background: linear-gradient(#ffffff, #ececea);
}

.tool svg, .close svg, .status svg {
    fill: none;
    stroke: #4d4d4d;
}

.tool svg .solid {
    fill: #4d4d4d;
    stroke: none;
}

.tool .green {
    stroke: #0b8a6a;
}

.tool .red {
    stroke: #da4453;
}

.tool .red .solid {
    fill: #da4453;
}

.off svg {
    opacity: 0.35;
}

.faint-icon svg {
    opacity: 0.15;
}

.mark {
    font-family: "DejaVu Sans", sans-serif;
    font-size: 8px;
    font-weight: bold;
    fill: #4d4d4d;
    stroke: none;
}

.mark.blue {
    fill: #1e9bf0;
}

.drop {
    width: 17px;
    height: 33px;
    flex: none;
}

.drop::after {
    content: "";
    border: 3px solid transparent;
    border-top-color: #000;
    border-bottom: none;
}

.sep {
    width: 1px;
    height: 21px;
    margin: 0 4px 0 3px;
    flex: none;
    background-color: #d3d1ce;
}

.tool-text {
    width: 60px;
    font-size: 9px;
    white-space: nowrap;
    color: #7b7b79;
}

.tool-text-wide {
    width: 67px;
}

.faint {
    color: #dddad4;
}

.glyph {
    font-family: "DejaVu Serif", serif;
    font-size: 20px;
    color: #4d4d4d;
}

.bold {
    font-weight: bold;
    font-size: 22px;
}

.slant {
    font-style: italic;
}

.under {
    text-decoration: underline;
}

/* text box or list with an arrow part at its right */
.combo {
    position: relative;
    display: flex;
    height: 21px;
    flex: none;
    border: 1px solid #aaa8a4;
    border-radius: 4px;
    background: linear-gradient(#ffffff, #eeedeb);
}

.combo::after {
    content: "";
    position: absolute;
    right: 6px;
    top: 7px;
    border: 4px solid transparent;
    border-top: 6px solid #7b7b79;
    border-bottom: none;
    pointer-events: none;
}

.combo select, .combo input {
    appearance: none;
    width: 100%;
    margin-right: 20px;
    padding-left: 5px;
    border: none;
    border-right: 1px solid #aaa8a4;
    border-radius: 3px 0 0 3px;
    background-color: #fff;
    outline: none;
}

.combo-font {
    width: 115px;
    margin-right: 10px;
}

.combo-size {
    width: 60px;
}

.combo-name {
    width: 121px;
    margin: 0 1px;
}

.combo-find {
    width: 248px;
    margin-left: 10px;
}

.italic {
    font-style: italic;
}

/* formula bar */
.formula-bar {
    height: 35px;
    flex: none;
    display: flex;
    align-items: center;
    padding-top: 1px;
    padding-right: 61px;
    background-color: #f1f0ee;
}

.formula {
    flex: 1;
    height: 20px;
    margin: 0 4px 0 1px;
    padding-left: 1px;
    border: 1px solid #aaa8a4;
    border-radius: 4px;
    background-color: #fff;
}

.expand {
    width: 11px;
    height: 19px;
    border: 1px solid #aaa8a4;
    border-radius: 5px;
    background-color: #fff;
}

.expand::after {
    content: "";
    border: 3px solid transparent;
    border-top: 4px solid #3c3c3c;
    border-bottom: none;
}

/* workspace */
.workspace {
    flex: 1;
    min-height: 0;
    display: flex;
    background-color: #f1f0ee;
}

.sheet-area {
    flex: 1;
    min-width: 0;
    display: flex;
    flex-direction: column;
    border-top: 1px solid #2b2b2b;
}

.sheet-row {
    flex: 1;
    min-height: 0;
    display: flex;
}

.sheet {
    flex: 1;
    min-width: 0;
    overflow: hidden;
    background-color: #fff;
}

table {
    width: 100%;
    table-layout: fixed;
    border-spacing: 0;
    font-family: "Liberation Sans", Arial, sans-serif;
    font-size: 10px;
    line-height: 14px;
    color: #111;
}

.c-num { width: 33px; }
.c-a { width: 22px; }
.c-b { width: 283px; }
.c-c { width: 142px; }
.c-d { width: 131px; }
.c-e { width: 173px; }
.c-f { width: 162px; }
.c-g { width: 275px; }
.c-h { width: 222px; }
.c-i { width: 149px; }
.c-j { width: 150px; }
.c-k { width: 59px; }

th {
    padding: 2px 0 0 1px;
    font-family: "DejaVu Sans Condensed", "DejaVu Sans", sans-serif;
    font-size: 11px;
    line-height: 12px;
    font-weight: normal;
    color: #4d4d4d;
    border-right: 1px solid #8a8986;
    border-bottom: 1px solid #8a8986;
    background: linear-gradient(90deg, #f8f8f6 45%, #efeeec 55%);
}

thead th {
    height: 16px;
    padding-left: 2px;
    background: linear-gradient(#f8f8f6 45%, #efeeec 55%);
}

thead .last {
    border-right: none;
}

thead .corner {
    background: #f5f5f3;
}

thead .picked {
    padding-left: 0;
    font-weight: bold;
    color: #fff;
    border-color: #dd5f30;
    background: linear-gradient(#f7a787 50%, #f07746 50%);
}

td {
    height: 15px;
    padding: 0 2px 0 1px;
    white-space: nowrap;
}

tbody th {
    height: 15px;
}

.h73 th { height: 73px; }
.h18 th { height: 18px; }
.h16 th { height: 16px; }

.h11 th {
    height: 11px;
    padding-top: 0;
    line-height: 10px;
}

.gap th {
    height: 8px;
    padding-top: 0;
    line-height: 7px;
}

.logo-cell {
    position: relative;
}

.logo {
    position: absolute;
    right: 2px;
    top: 16px;
    background-color: #fff;
    box-shadow: 0 0 4px #777;
}

.logo-name {
    font-family: "DejaVu Sans", sans-serif;
    font-size: 12px;
    fill: #222;
}

.logo-tag {
    font-family: "DejaVu Sans", sans-serif;
    font-size: 9px;
    fill: #555;
}

.report-title {
    font-family: "DejaVu Sans", sans-serif;
    font-size: 22px;
    text-align: center;
    color: #0070c0;
}

.label {
    font-size: 8px;
    text-align: right;
    padding-right: 6px;
    color: #4472c4;
}

.box, .date, .num {
    font-size: 11px;
}

.box, .grand, .grand-label {
    border-right: 1px solid #b4c6e7;
    border-bottom: 1px solid #b4c6e7;
    box-shadow: 0 -1px #b4c6e7, -1px 0 #b4c6e7, -1px -1px #b4c6e7;
}

.heads th {
    font-weight: bold;
    color: #fff;
    border-color: #dd5f30;
    border-bottom-color: #000;
    background: linear-gradient(90deg, #f7a787 48%, #f07746 50%);
}

.heads td {
    height: 50px;
    border-bottom: 1px solid #000;
}

.heads .head {
    font-family: "DejaVu Sans", sans-serif;
    font-size: 11px;
    text-align: center;
    color: #fff;
    background-color: #0070c0;
    border-right: 1px solid #b4c6e7;
    box-shadow: 0 -1px #b4c6e7;
}

.heads .plain {
    box-shadow: 0 -1px #0070c0;
}

.heads .cursor {
    position: relative;
    outline: 2px solid #000;
    outline-offset: -2px;
    box-shadow: 0 -1px #000;
}

.cursor::after {
    content: "";
    position: absolute;
    right: -2px;
    bottom: -1px;
    width: 4px;
    height: 4px;
    background-color: #000;
}

.date, .num {
    padding-bottom: 1px;
}

.date {
    text-align: center;
}

.num {
    text-align: right;
}

.sum, .grand {
    font-size: 12px;
    font-weight: bold;
    text-align: right;
    color: #000;
}

.sum {
    border-right: 1px solid #b4c6e7;
    box-shadow: 0 -1px #b4c6e7, -1px 0 #b4c6e7, -1px -1px #b4c6e7;
    padding-right: 1px;
}

.neg {
    color: #f00;
}

.total td {
    border-bottom: 1px solid #0070c0;
}

.closing td {
    height: 16px;
    border-bottom-width: 3px;
    line-height: 13px;
}

.grand-label {
    font-weight: bold;
    text-align: right;
    padding-right: 16px;
    color: #4472c4;
    background-color: #d9e1f2;
}

/* scroll bars */
.vscroll {
    width: 12px;
    flex: none;
    display: grid;
    grid-template-rows: 13px 358fr 229fr 240fr 14px;
    border-left: 1px solid #b1afab;
    border-right: 1px solid #c8c6c2;
    background: linear-gradient(90deg, #d2d0cd, #e2e1df);
}

.vscroll .thumb {
    grid-row: 3;
}

.vscroll .down {
    grid-row: 5;
}

.thumb {
    display: flex;
    align-items: center;
    justify-content: center;
    border: 1px solid #a09e9a;
    border-radius: 6px;
    background: linear-gradient(90deg, #ffffff, #e6e5e2);
}

.vscroll .thumb::after {
    content: "";
    width: 4px;
    height: 7px;
    background: repeating-linear-gradient(#aaa8a4 0, #aaa8a4 1px, transparent 1px, transparent 3px);
}

.step {
    display: flex;
    align-items: center;
    justify-content: center;
    border: 1px solid #c8c6c2;
    border-radius: 6px;
    background-color: #f5f5f3;
}

.step::after {
    content: "";
    border: 3px solid transparent;
}

.up::after {
    border-bottom: 4px solid #666;
    border-top: none;
}

.down::after {
    border-top: 4px solid #666;
    border-bottom: none;
}

.left::after {
    border-right: 4px solid #aaa;
    border-left: none;
}

.right::after {
    border-left: 4px solid #666;
    border-right: none;
}

.hscroll {
    height: 13px;
    flex: none;
    display: flex;
    margin-right: 12px;
    border-top: 1px solid #a9a7a3;
    border-bottom: 1px solid #c0beba;
    background: linear-gradient(#d2d0cd, #e2e1df);
}

.hscroll .thumb {
    width: 74px;
    background: linear-gradient(#ffffff, #e6e5e2);
}

.hscroll .thumb::after {
    content: "";
    width: 7px;
    height: 4px;
    background: repeating-linear-gradient(90deg, #aaa8a4 0, #aaa8a4 1px, transparent 1px, transparent 3px);
}

.hscroll .left {
    width: 10px;
}

.hscroll .right {
    width: 12px;
}

.track {
    flex: 1;
}

.splitter {
    width: 6px;
    background-color: #2b2927;
}

/* sheet tabs */
.tabs {
    height: 16px;
    flex: none;
    display: flex;
    padding-left: 7px;
}

.tabs button {
    width: 15px;
    fill: #333;
}

.tabs .add {
    width: 30px;
    margin-right: 1px;
}

.tabs .tab {
    width: 51px;
    height: 15px;
    font-size: 10px;
    font-weight: bold;
    border: 1px solid #8a8986;
    border-top: none;
    background-color: #fff;
}

/* shapes column */
.shapes {
    width: 56px;
    flex: none;
    display: flex;
    flex-direction: column;
    align-items: center;
}

.shapes button {
    width: 35px;
    height: 35px;
    flex: none;
    fill: #4d4d4d;
}

.shapes .edge {
    fill: none;
    stroke: #f1f0ee;
}

.shapes .hollow {
    fill: none;
    stroke: #4d4d4d;
}

.shapes .ring {
    fill: none;
    stroke: #4d4d4d;
    stroke-width: 4;
}

.shapes-grip {
    width: 7px;
    height: 4px;
    margin: 30px 0 6px;
    flex: none;
    background: repeating-linear-gradient(90deg, #c8c6c2 0, #c8c6c2 1px, transparent 1px, transparent 3px);
}

/* find bar */
.findbar {
    height: 42px;
    border-bottom-color: #2b2b2b;
}

.close {
    width: 16px;
    margin-left: 7px;
}

.find-all {
    width: 35px;
}

.check {
    display: flex;
    align-items: center;
    gap: 8px;
    margin-left: 6px;
    white-space: nowrap;
}

.find-all + .check {
    margin-left: 12px;
}

.check input {
    appearance: none;
    width: 14px;
    height: 14px;
    border: 1px solid #8a8986;
    border-radius: 3px;
    background-color: #fff;
}

.search {
    margin-left: 9px;
}

.drawing {
    display: flex;
    align-items: center;
    margin-left: auto;
    margin-right: 113px;
}

/* status bar */
.status {
    height: 16px;
    flex: none;
    display: grid;
    grid-template-columns: 354fr 420fr 373fr 67px 28px 28px 28px 403fr 142px 39px;
    align-items: center;
    padding-top: 1px;
    font-size: 9px;
    color: #5a5a58;
    background-color: #f1f0ee;
}

.cell {
    height: 14px;
    display: flex;
    align-items: center;
    padding-top: 1px;
    padding-left: 8px;
    border-right: 1px solid #c4c2be;
}

.pale svg {
    opacity: 0.4;
}

.sum-cell {
    padding-left: 0;
    justify-content: center;
}

.zoom {
    gap: 4px;
}

.zoom-step {
    width: 12px;
    font-size: 14px;
    line-height: 12px;
}

.zoom input {
    appearance: none;
    flex: 1;
    min-width: 0;
    height: 2px;
    background-color: #2b2b2b;
}

.zoom input::-webkit-slider-thumb {
    appearance: none;
    width: 8px;
    height: 8px;
    border: 1px solid #4d4d4d;
    border-radius: 4px;
    background-color: #fff;
}

.percent {
    border: none;
}
```
